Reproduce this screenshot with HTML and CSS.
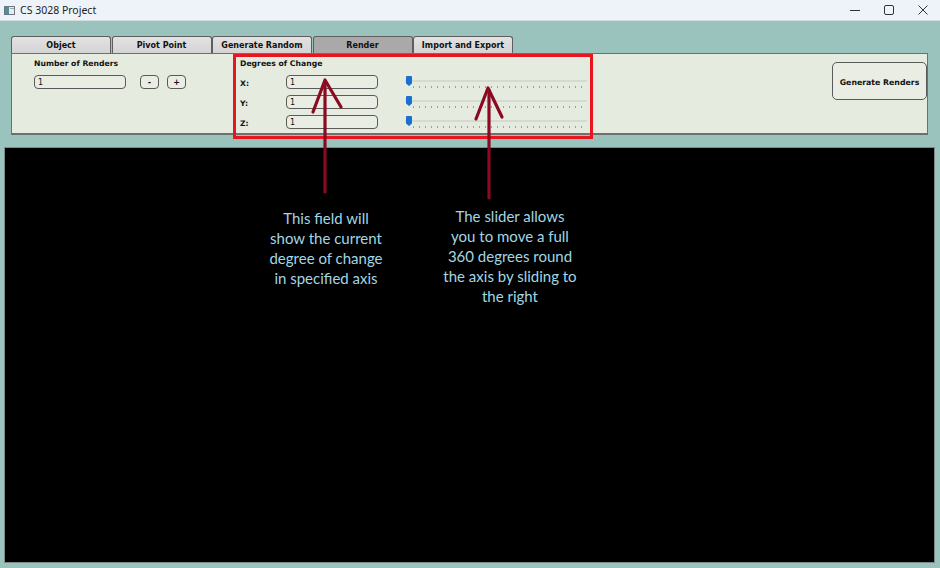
FILE: index.html
```html
<!DOCTYPE html>
<html lang="en">
<head>
<meta charset="utf-8">
<title>CS 3028 Project</title>
<link rel="stylesheet" href="styles.css">
</head>
<body>
<header class="titlebar">
  <svg class="app-icon" width="11" height="9" viewBox="0 0 11 9"><rect x="0.5" y="0.5" width="10" height="8" fill="#e8ecef" stroke="#6b7680"/><rect x="1" y="1" width="4" height="7" fill="#4d8f9a"/><rect x="6" y="2" width="4" height="1" fill="#a0a8b0"/></svg>
  <span class="title">CS 3028 Project</span>
  <div class="controls">
    <svg width="10" height="10" viewBox="0 0 10 10"><line x1="0" y1="5.5" x2="10" y2="5.5" stroke="#333" stroke-width="1"/></svg>
    <svg width="10" height="10" viewBox="0 0 10 10"><rect x="0.5" y="0.5" width="9" height="9" rx="1.5" fill="none" stroke="#333" stroke-width="1"/></svg>
    <svg width="10" height="10" viewBox="0 0 10 10"><path d="M0.5 0.5 L9.5 9.5 M9.5 0.5 L0.5 9.5" stroke="#333" stroke-width="1"/></svg>
  </div>
</header>

<nav class="tabs">
  <div class="tab">Object</div>
  <div class="tab">Pivot Point</div>
  <div class="tab">Generate Random</div>
  <div class="tab active">Render</div>
  <div class="tab">Import and Export</div>
</nav>

<section class="panel">
  <div class="renders">
    <div class="label">Number of Renders</div>
    <div class="renders-row">
      <div class="field">1</div>
      <button class="small">-</button>
      <button class="small">+</button>
    </div>
  </div>
  <div class="degrees">
    <div class="label">Degrees of Change</div>
    <div class="axis"><span class="axis-label">X:</span><div class="field">1</div><div class="slider"><span class="thumb"></span></div></div>
    <div class="axis"><span class="axis-label">Y:</span><div class="field">1</div><div class="slider"><span class="thumb"></span></div></div>
    <div class="axis"><span class="axis-label">Z:</span><div class="field">1</div><div class="slider"><span class="thumb"></span></div></div>
  </div>
  <button class="generate">Generate Renders</button>
</section>

<main class="viewport"></main>

<div class="highlight"></div>
<svg class="arrows" width="940" height="568" viewBox="0 0 940 568">
  <g stroke="#8a0a22" stroke-width="3.2" fill="none" stroke-linecap="round" stroke-linejoin="round">
    <line x1="325" y1="192" x2="325" y2="82"/>
    <polyline points="313,112 325,80 341,107"/>
    <line x1="489" y1="198" x2="489" y2="90"/>
    <polyline points="476,119 488,88 502,117"/>
  </g>
</svg>
<p class="note note-field">This field will<br>show the current<br>degree of change<br>in specified axis</p>
<p class="note note-slider">The slider allows<br>you to move a full<br>360 degrees round<br>the axis by sliding to<br>the right</p>
</body>
</html>
```

FILE: styles.css
```css
html, body {
  margin: 0;
  padding: 0;
}
body {
  width: 940px;
  height: 568px;
  background: #9bc3bd;
  font-family: "DejaVu Sans", Verdana, sans-serif;
  color: #111;
  position: relative;
  overflow: hidden;
}

.titlebar {
  height: 21px;
  box-sizing: border-box;
  background: #eef3f9;
  border-bottom: 1px solid #d3dde0;
  display: flex;
  align-items: center;
  padding-left: 4px;
}
.app-icon {
  margin-right: 5px;
}
.title {
  font-family: "Noto Sans", "Open Sans", sans-serif;
  font-size: 10.5px;
  color: #222;
}
.controls {
  margin-left: auto;
  display: flex;
  align-items: center;
  gap: 24px;
  margin-right: 12px;
}

.tabs {
  display: flex;
  margin: 15px 0 0 11px;
  height: 17px;
  gap: 0.5px;
}
.tab {
  width: 100px;
  height: 17px;
  box-sizing: border-box;
  border: 1px solid #5e5e5e;
  border-bottom: none;
  border-radius: 3px 3px 0 0;
  background: linear-gradient(#e2e2e2, #d4d4d4);
  font-size: 8px;
  font-weight: bold;
  display: flex;
  align-items: center;
  justify-content: center;
  padding-top: 1px;
}
.tab.active {
  background: #a9a9a9;
}

.panel {
  margin-left: 11px;
  width: 917px;
  height: 82px;
  box-sizing: border-box;
  background: #e6ebe0;
  border: 1px solid #6f6f6f;
  border-bottom-width: 2px;
  display: flex;
  align-items: flex-start;
  padding: 4px 0 0 22px;
}
.label {
  font-size: 7.7px;
  font-weight: bold;
  height: 10px;
  line-height: 12px;
  margin-bottom: 7px;
}
.renders {
  width: 206px;
}
.renders-row {
  display: flex;
  align-items: center;
}
.field {
  width: 92px;
  height: 14px;
  box-sizing: border-box;
  border: 1px solid #5a5a5a;
  border-radius: 4px;
  background: #e9ede4;
  font-size: 8px;
  line-height: 13px;
  padding-left: 3px;
}
.small {
  width: 19px;
  height: 14px;
  box-sizing: border-box;
  border: 1px solid #5a5a5a;
  border-radius: 4px;
  background: #e9ede4;
  font-family: "DejaVu Sans", sans-serif;
  font-size: 8px;
  font-weight: bold;
  padding: 1px 0 0;
  line-height: 12px;
  color: #111;
  margin-left: 14px;
}
.small + .small {
  margin-left: 8px;
}

.degrees {
  display: flex;
  flex-direction: column;
}
.axis {
  display: flex;
  align-items: center;
  height: 14px;
  margin-bottom: 6px;
}
.axis-label {
  width: 46px;
  font-size: 7.7px;
  font-weight: bold;
  padding-top: 2px;
}
.slider {
  position: relative;
  width: 182px;
  height: 14px;
  margin-left: 27px;
}
.slider::before {
  content: "";
  position: absolute;
  left: 0;
  right: 0;
  top: 5px;
  height: 2px;
  background: #d4d9d4;
}
.slider::after {
  content: "";
  position: absolute;
  left: 8px;
  right: 4px;
  top: 11px;
  height: 2px;
  background-image: linear-gradient(to right, #9a9f9a 1px, transparent 1px);
  background-size: 6px 2px;
}
.thumb {
  position: absolute;
  left: 1px;
  top: 1px;
  width: 6px;
  height: 10px;
  background: #1c6fd0;
  border-radius: 1px 1px 0 0;
  clip-path: polygon(0 0, 100% 0, 100% 75%, 50% 100%, 0 75%);
  z-index: 1;
}

.generate {
  margin-left: auto;
  margin-top: 4px;
  margin-right: 0;
  width: 95px;
  height: 38px;
  box-sizing: border-box;
  border: 1px solid #5a5a5a;
  border-radius: 5px;
  background: #e9ede4;
  font-family: "DejaVu Sans", sans-serif;
  font-size: 7.8px;
  font-weight: bold;
  color: #111;
  padding: 3px 0 0;
}

.viewport {
  margin: 12px 5px 0 4px;
  height: 416px;
  box-sizing: border-box;
  background: #000;
  border: 1px solid #7d8a88;
}

.highlight {
  position: absolute;
  left: 233px;
  top: 54px;
  width: 360px;
  height: 85px;
  box-sizing: border-box;
  border: 3px solid #e8141e;
}
.arrows {
  position: absolute;
  left: 0;
  top: 0;
  pointer-events: none;
}
.note {
  position: absolute;
  margin: 0;
  font-family: Lato, "Open Sans", sans-serif;
  font-size: 15px;
  line-height: 20px;
  color: #a3d6e4;
  text-align: center;
  width: 180px;
}
.note-field {
  left: 236px;
  top: 208px;
}
.note-slider {
  left: 420px;
  top: 206px;
}
```
